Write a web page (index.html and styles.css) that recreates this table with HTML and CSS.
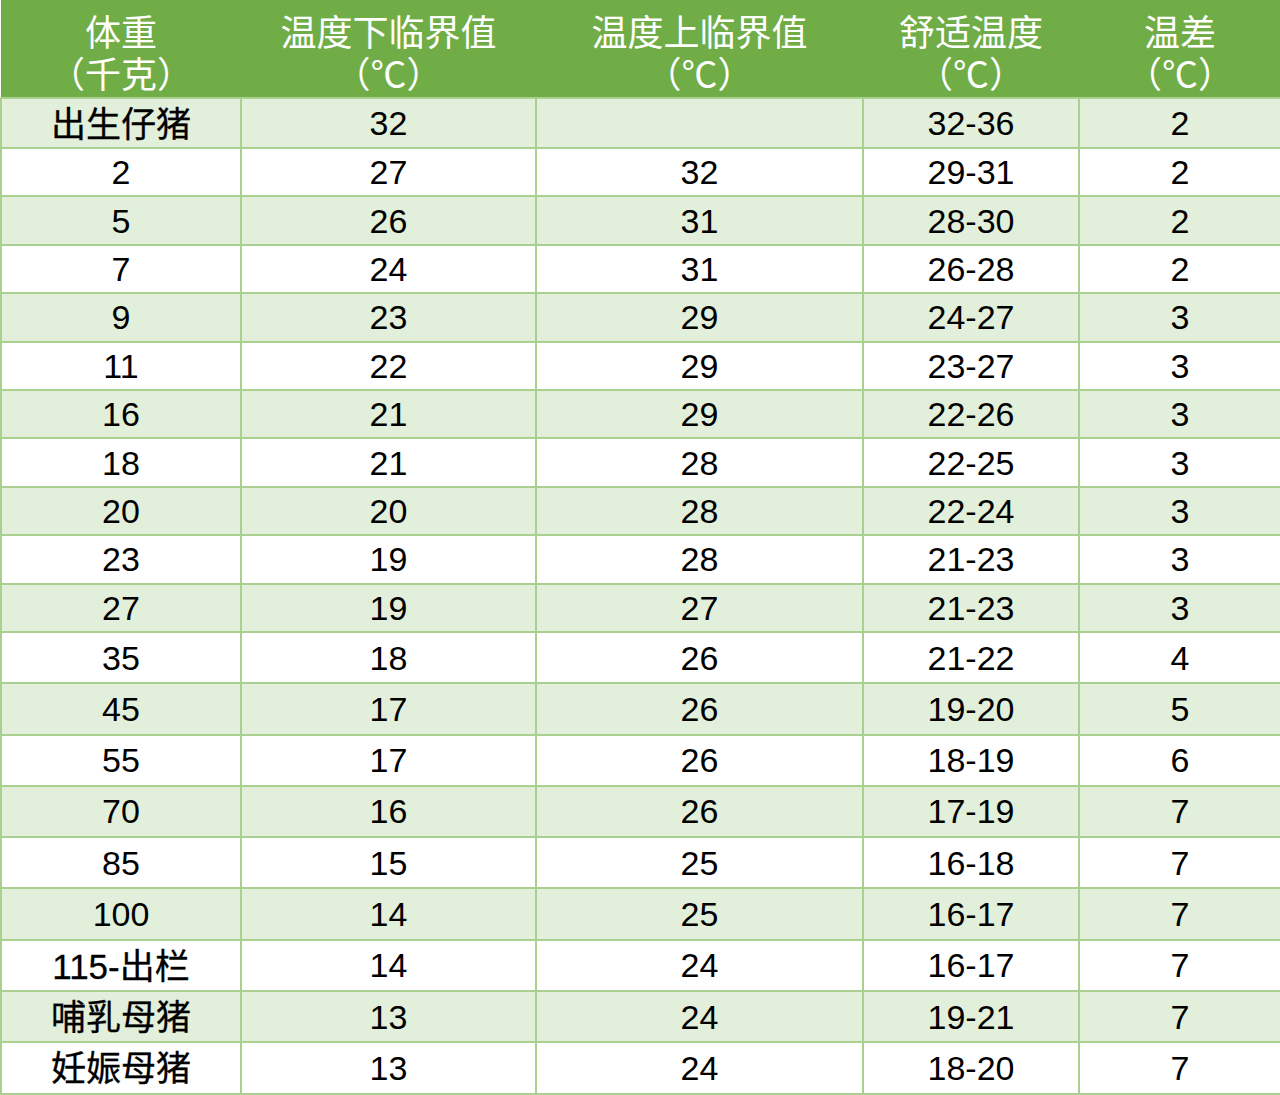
FILE: index.html
```html
<!DOCTYPE html>
<html lang="zh-CN">
<head>
<meta charset="utf-8">
<title>猪舍温度表</title>
<link rel="stylesheet" href="styles.css">
</head>
<body>
<table class="temp-table">
  <colgroup>
    <col class="c1"><col class="c2"><col class="c3"><col class="c4"><col class="c5">
  </colgroup>
  <thead>
    <tr>
      <th>体重<br>（千克）</th>
      <th>温度下临界值<br>（℃）</th>
      <th>温度上临界值<br>（℃）</th>
      <th>舒适温度<br>（℃）</th>
      <th>温差<br>（℃）</th>
    </tr>
  </thead>
  <tbody>
    <tr class="alt r0"><td class="name">出生仔猪</td><td>32</td><td></td><td>32-36</td><td>2</td></tr>
    <tr class="ra"><td>2</td><td>27</td><td>32</td><td>29-31</td><td>2</td></tr>
    <tr class="alt ra"><td>5</td><td>26</td><td>31</td><td>28-30</td><td>2</td></tr>
    <tr class="ra"><td>7</td><td>24</td><td>31</td><td>26-28</td><td>2</td></tr>
    <tr class="alt ra"><td>9</td><td>23</td><td>29</td><td>24-27</td><td>3</td></tr>
    <tr class="ra"><td>11</td><td>22</td><td>29</td><td>23-27</td><td>3</td></tr>
    <tr class="alt ra"><td>16</td><td>21</td><td>29</td><td>22-26</td><td>3</td></tr>
    <tr class="ra"><td>18</td><td>21</td><td>28</td><td>22-25</td><td>3</td></tr>
    <tr class="alt ra"><td>20</td><td>20</td><td>28</td><td>22-24</td><td>3</td></tr>
    <tr class="ra"><td>23</td><td>19</td><td>28</td><td>21-23</td><td>3</td></tr>
    <tr class="alt ra"><td>27</td><td>19</td><td>27</td><td>21-23</td><td>3</td></tr>
    <tr class="rb"><td>35</td><td>18</td><td>26</td><td>21-22</td><td>4</td></tr>
    <tr class="alt rb"><td>45</td><td>17</td><td>26</td><td>19-20</td><td>5</td></tr>
    <tr class="rb"><td>55</td><td>17</td><td>26</td><td>18-19</td><td>6</td></tr>
    <tr class="alt rb"><td>70</td><td>16</td><td>26</td><td>17-19</td><td>7</td></tr>
    <tr class="rb"><td>85</td><td>15</td><td>25</td><td>16-18</td><td>7</td></tr>
    <tr class="alt rb"><td>100</td><td>14</td><td>25</td><td>16-17</td><td>7</td></tr>
    <tr class="rb"><td class="name">115-出栏</td><td>14</td><td>24</td><td>16-17</td><td>7</td></tr>
    <tr class="alt rb"><td class="name">哺乳母猪</td><td>13</td><td>24</td><td>19-21</td><td>7</td></tr>
    <tr class="rb"><td class="name">妊娠母猪</td><td>13</td><td>24</td><td>18-20</td><td>7</td></tr>
  </tbody>
</table>
</body>
</html>
```

FILE: styles.css
```css
html, body {
  margin: 0;
  padding: 0;
  background: #ffffff;
}

.temp-table {
  width: 1280px;
  border-collapse: collapse;
  table-layout: fixed;
  font-family: "Liberation Sans", "Noto Sans CJK SC", sans-serif;
  color: #000000;
}

.c1 { width: 240px; }
.c2 { width: 295px; }
.c3 { width: 327px; }
.c4 { width: 216px; }
.c5 { width: 202px; }

.temp-table th {
  background: #70ad47;
  color: #ffffff;
  font-family: "Liberation Sans", "Noto Sans CJK SC", sans-serif;
  font-weight: 400;
  font-size: 36px;
  line-height: 42px;
  height: 84px;
  padding: 13px 0 0 0;
  text-align: center;
  vertical-align: middle;
  border: none;
  border-bottom: 2px solid #a9d08e;
}

.temp-table td {
  border: 2px solid #a9d08e;
  padding: 0;
  text-align: center;
  vertical-align: middle;
  font-size: 34px;
  line-height: 40px;
}

.temp-table td.name {
  font-weight: 400;
  font-size: 35px;
  padding-top: 3px;
  -webkit-text-stroke: 0.3px #000000;
}

.temp-table tr.alt td {
  background: #e2efda;
}

.r0 td { height: 48px; }
.ra td { height: 46.4px; }
.rb td { height: 49.3px; }
.r0 td.name { height: 45px; }
.rb td.name { height: 46.3px; }
```
